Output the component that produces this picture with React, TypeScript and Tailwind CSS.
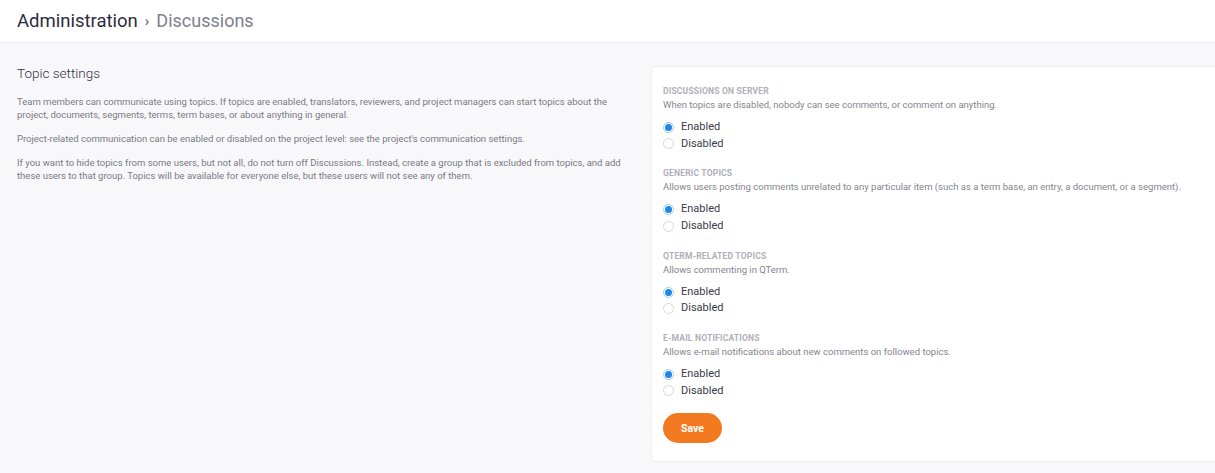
import React from "react";

const sections = [
  { title: "DISCUSSIONS ON SERVER", desc: "When topics are disabled, nobody can see comments, or comment on anything." },
  { title: "GENERIC TOPICS", desc: "Allows users posting comments unrelated to any particular item (such as a term base, an entry, a document, or a segment)." },
  { title: "QTERM-RELATED TOPICS", desc: "Allows commenting in QTerm." },
  { title: "E-MAIL NOTIFICATIONS", desc: "Allows e-mail notifications about new comments on followed topics." },
];

function Radio({ checked, label }: { checked: boolean; label: string }) {
  return (
    <div className="flex items-center h-[16.5px]">
      {checked ? (
        <span className="w-[11px] h-[11px] rounded-full border border-[#9fcdf5] bg-white flex items-center justify-center">
          <span className="w-[7px] h-[7px] rounded-full bg-[#1e88e5]" />
        </span>
      ) : (
        <span className="w-[11px] h-[11px] rounded-full border border-[#d6d6dc] bg-white" />
      )}
      <span className="ml-[7px] text-[11px] text-[#3a3a48]">{label}</span>
    </div>
  );
}

export default function App() {
  return (
    <div className="w-[1215px] h-[473px] bg-[#f8f8fb] overflow-hidden" style={{ fontFamily: "Roboto, 'Liberation Sans', sans-serif" }}>
      <div className="h-[43px] bg-white border-b border-[#ececf2] flex items-center pl-[17px]">
        <span className="text-[18.5px] text-[#2b2b3d] leading-none">Administration</span>
        <span className="text-[15px] text-[#55556a] mx-[7px] leading-none">›</span>
        <span className="text-[18px] text-[#80808c] leading-none">Discussions</span>
      </div>
      <div className="flex">
        <div className="w-[651px] shrink-0 pl-[17px] pr-[25px] pt-[24px]">
          <h2 className="text-[13.5px] text-[#2f2f45] font-light leading-none">Topic settings</h2>
          <div className="mt-[14px] text-[9.5px] text-[#7a7a84] leading-[13px] space-y-[11px]">
            <p>Team members can communicate using topics. If topics are enabled, translators, reviewers, and project managers can start topics about the project, documents, segments, terms, term bases, or about anything in general.</p>
            <p>Project-related communication can be enabled or disabled on the project level: see the project's communication settings.</p>
            <p>If you want to hide topics from some users, but not all, do not turn off Discussions. Instead, create a group that is excluded from topics, and add these users to that group. Topics will be available for everyone else, but these users will not see any of them.</p>
          </div>
        </div>
        <div className="flex-1 mt-[23px] h-[396px] bg-white rounded-l-[4px] border border-r-0 border-[#ededf2] pl-[11px] pt-[18px]">
          {sections.map((s) => (
            <div key={s.title} className="h-[82.4px]">
              <div className="text-[8.5px] font-bold text-[#b0b0b8] tracking-[0.2px] leading-[12px]">{s.title}</div>
              <div className="text-[9.5px] text-[#85858f] leading-[13px] mt-[1px]">{s.desc}</div>
              <div className="mt-[8px]">
                <Radio checked label="Enabled" />
                <Radio checked={false} label="Disabled" />
              </div>
            </div>
          ))}
          <button className="mt-[-5px] w-[59px] h-[30px] rounded-full bg-[#f47a22] text-white text-[10.5px] font-bold">Save</button>
        </div>
      </div>
    </div>
  );
}
